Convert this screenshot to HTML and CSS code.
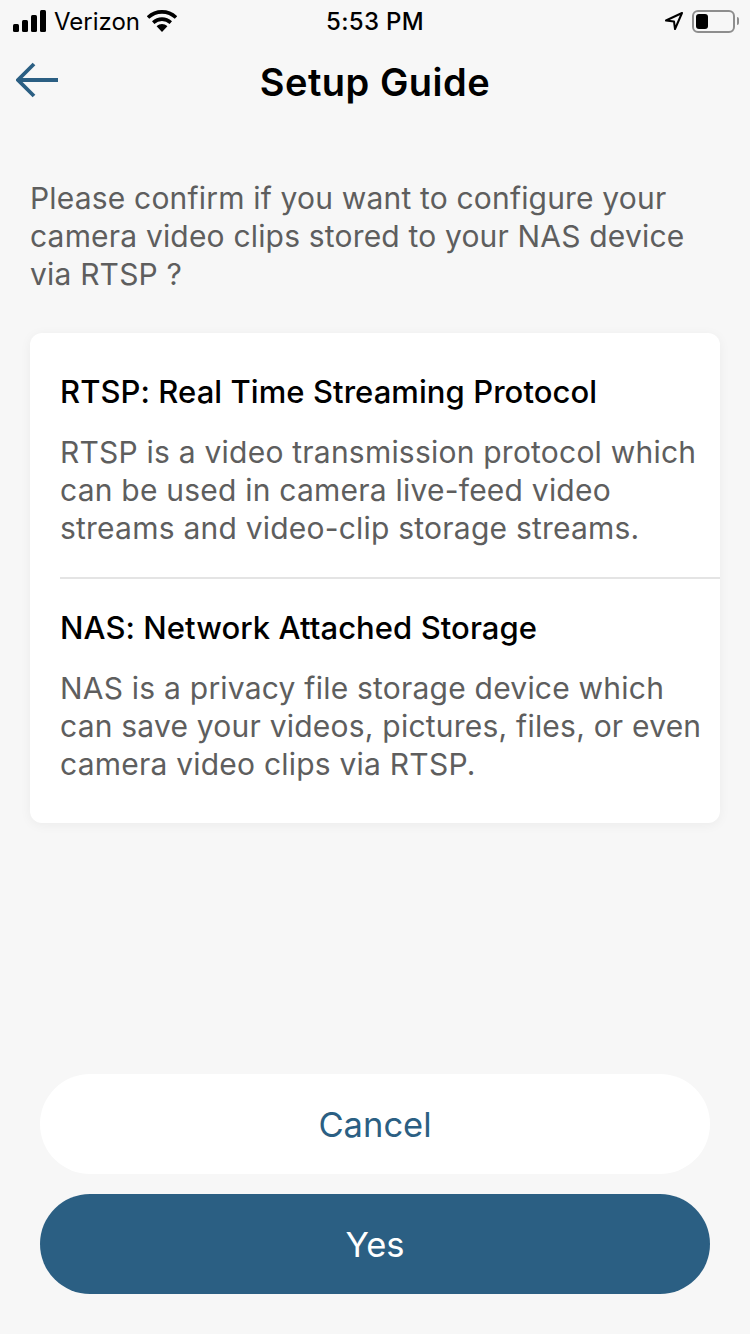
FILE: index.html
```html
<!DOCTYPE html>
<html lang="en">
<head>
    <meta charset="UTF-8">
    <meta name="viewport" content="width=device-width, initial-scale=1.0">
    <title>Setup Guide</title>
    <link rel="stylesheet" href="styles.css">
</head>
<body>
    <div class="screen">
        <div class="status-bar">
            <div class="status-left">
                <svg class="signal" width="34" height="22" viewBox="0 0 34 22">
                    <rect x="0" y="14" width="6" height="8" rx="1.5"/>
                    <rect x="9" y="10" width="6" height="12" rx="1.5"/>
                    <rect x="18" y="5" width="6" height="17" rx="1.5"/>
                    <rect x="27" y="0" width="6" height="22" rx="1.5"/>
                </svg>
                <span class="carrier">Verizon</span>
                <svg class="wifi" width="30" height="22" viewBox="0 0 30 22">
                    <path d="M1 7.5C9 0 21 0 29 7.5" fill="none" stroke="#000" stroke-width="3.6"/>
                    <path d="M6.2 12.6C11.4 8 18.6 8 23.8 12.6" fill="none" stroke="#000" stroke-width="3.6"/>
                    <path d="M9.6 16.2C13 13.2 17 13.2 20.4 16.2L15 22Z"/>
                </svg>
            </div>
            <div class="status-time">5:53 PM</div>
            <div class="status-right">
                <svg class="location" width="20" height="20" viewBox="0 0 20 20">
                    <path d="M18 2L2 9.5L10 10.5L11 18Z" fill="none" stroke="#000" stroke-width="2" stroke-linejoin="round"/>
                </svg>
                <div class="battery"><div class="battery-fill"></div></div>
                <div class="battery-cap"></div>
            </div>
        </div>

        <div class="nav-bar">
            <svg class="back" width="44" height="36" viewBox="0 0 44 36">
                <path d="M18 2L2 18L18 34M2 18H42" fill="none" stroke="#2b5f83" stroke-width="3.8"/>
            </svg>
            <h1 class="nav-title">Setup Guide</h1>
        </div>

        <div class="content">
            <p class="intro">Please confirm if you want to configure your camera video clips stored to your NAS device via RTSP ?</p>

            <div class="card">
                <div class="card-section">
                    <h2 class="card-title">RTSP: Real Time Streaming Protocol</h2>
                    <p class="card-text">RTSP is a video transmission protocol which can be used in camera live-feed video streams and video-clip storage streams.</p>
                </div>
                <div class="card-section card-section-last">
                    <h2 class="card-title">NAS: Network Attached Storage</h2>
                    <p class="card-text">NAS is a privacy file storage device which can save your videos, pictures, files, or even camera video clips via RTSP.</p>
                </div>
            </div>
        </div>

        <div class="actions">
            <button class="btn btn-cancel">Cancel</button>
            <button class="btn btn-yes">Yes</button>
        </div>
    </div>
</body>
</html>
```
FILE: styles.css
```css
* {
    box-sizing: border-box;
}
html, body {
    margin: 0;
    padding: 0;
}
body {
    font-family: Inter, "Noto Sans", sans-serif;
    background-color: #f7f7f7;
    color: #000;
}
.screen {
    width: 750px;
    height: 1334px;
    display: flex;
    flex-direction: column;
    overflow: hidden;
}
.status-bar {
    height: 40px;
    padding-top: 2px;
    display: grid;
    grid-template-columns: 1fr auto 1fr;
    align-items: center;
}
.status-left {
    display: flex;
    align-items: center;
    padding-left: 13px;
}
.signal {
    width: 34px;
}
.carrier {
    font-size: 24px;
    margin-left: 7px;
}
.wifi {
    margin-left: 7px;
}
.status-time {
    font-size: 24px;
    font-weight: 500;
    letter-spacing: 0.3px;
}
.status-right {
    display: flex;
    align-items: center;
    justify-content: flex-end;
    padding-right: 11px;
}
.location {
    margin-right: 8px;
}
.battery {
    width: 43px;
    height: 23px;
    border: 2px solid #8e8e8e;
    border-radius: 6px;
    padding: 2px;
}
.battery-fill {
    width: 12px;
    height: 15px;
    background-color: #000;
    border-radius: 3px;
}
.battery-cap {
    width: 2px;
    height: 8px;
    margin-left: 2px;
    background-color: #8e8e8e;
    border-radius: 0 2px 2px 0;
}
.nav-bar {
    height: 88px;
    display: flex;
    align-items: center;
    justify-content: center;
    position: relative;
}
.back {
    position: absolute;
    left: 16px;
    top: 22px;
}
.nav-title {
    margin: 0;
    font-size: 38px;
    font-weight: 600;
    letter-spacing: 0.5px;
    line-height: 44px;
    padding-bottom: 4px;
}
.content {
    flex: 1;
    padding: 51px 30px 0;
}
.intro {
    margin: 0 0 40px;
    font-size: 30px;
    letter-spacing: 0.18px;
    line-height: 38px;
    color: #5e5e5e;
}
.card {
    background-color: #fff;
    border-radius: 12px;
    box-shadow: 0 2px 12px rgba(0, 0, 0, 0.05);
    height: 490px;
}
.card-section {
    margin-left: 30px;
    padding-top: 40px;
    height: 246px;
    border-bottom: 2px solid #e4e4e4;
}
.card-section-last {
    border-bottom: none;
    height: 244px;
    padding-top: 30px;
}
.card-title {
    margin: 0 0 22px;
    font-size: 31px;
    font-weight: 500;
    letter-spacing: 0.07px;
    line-height: 38px;
}
.card-text {
    margin: 0;
    font-size: 30px;
    letter-spacing: 0.22px;
    line-height: 38px;
    color: #5e5e5e;
}
.actions {
    padding: 0 40px 40px;
    display: flex;
    flex-direction: column;
    gap: 20px;
}
.btn {
    height: 100px;
    border: none;
    border-radius: 50px;
    font-family: inherit;
    font-size: 34.5px;
    cursor: pointer;
}
.btn-cancel {
    background-color: #fff;
    color: #2b5f83;
}
.btn-yes {
    background-color: #2b5f83;
    color: #fff;
}
```
